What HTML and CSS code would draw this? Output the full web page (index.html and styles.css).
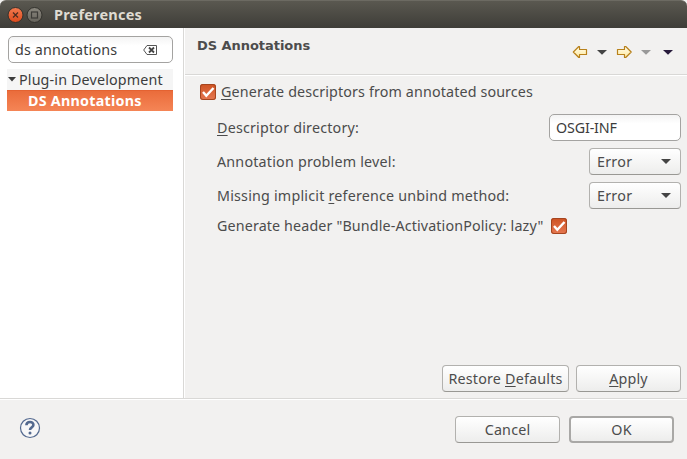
FILE: index.html
```html
<!DOCTYPE html>
<html lang="en"><head><meta charset="utf-8"><title>Preferences</title><link rel="stylesheet" href="styles.css"></head>
<body>
<div class="window">
  <header class="titlebar">
    <svg width="46" height="20" viewBox="0 0 46 20">
      <defs><linearGradient id="close" x2="0" y2="1"><stop stop-color="#f37b50"/><stop offset="1" stop-color="#dc4a1c"/></linearGradient>
      <linearGradient id="max" x2="0" y2="1"><stop stop-color="#8b887f"/><stop offset="1" stop-color="#65635b"/></linearGradient></defs>
      <circle cx="9.500" cy="10" r="7.500" fill="url(#close)" stroke="#32312c"/>
      <path d="M7 7.500l5 5M12 7.500l-5 5" stroke="#4b2c20" stroke-width="1.200"/>
      <circle cx="28.500" cy="10" r="7.500" fill="url(#max)" stroke="#32312c"/>
      <rect x="25.500" y="7" width="6" height="6" fill="none" stroke="#3c3b37" stroke-width="1.200"/>
    </svg>
    <h1><span>Preferences</span></h1>
  </header>
  <div class="body">
    <nav class="sidebar">
      <div class="field search"><span class="t-search">ds annotations</span>
        <svg width="14" height="10" viewBox="0 0 14 10"><path d="M4 .5h9.500v9H4L.7 5z" fill="none" stroke="#555"/><path d="M6 2.500l5 5M11 2.500l-5 5" stroke="#444" stroke-width="1.800"/></svg>
      </div>
      <div class="tree">
        <div class="parent"><svg width="8" height="5" viewBox="0 0 8 5"><path d="M0 0h8L4 4.500z" fill="#3c3c3c"/></svg><span class="t-plug">Plug-in Development</span></div>
        <div class="selected"><span class="t-sel">DS Annotations</span></div>
      </div>
    </nav>
    <main>
      <div class="heading"><h2><span>DS Annotations</span></h2>
        <svg width="104" height="14" viewBox="0 0 104 14">
          <defs><linearGradient id="gold" x2="0" y2="1"><stop stop-color="#fffdf0"/><stop offset="1" stop-color="#ffe99b"/></linearGradient></defs>
          <path d="M1.300 7L6.800 1.500H7.500V4.500h7v5h-7v3H6.800z" fill="url(#gold)" stroke="#b8811b" stroke-width="1.200" stroke-linejoin="round"/>
          <path d="M25 5h10l-5 4.800z" fill="#444"/>
          <path d="M59.200 7L53.700 1.500H52.500V4.500h-7v5h7v3h1.200z" fill="url(#gold)" stroke="#b8811b" stroke-width="1.200" stroke-linejoin="round"/>
          <path d="M69 5h10l-5 4.800z" fill="#999"/>
          <path d="M91 5h10l-5 4.800z" fill="#281b3c"/>
        </svg>
      </div>
      <div class="content">
        <div class="option"><i class="check"><svg width="16" height="16" viewBox="0 0 16 16"><path d="M3 8l3.300 3.800L13.500 4" fill="none" stroke="#fff" stroke-width="2.400"/></svg></i><span class="t-gen"><u>G</u>enerate descriptors from annotated sources</span></div>
        <div class="row"><span class="t-dir"><u>D</u>escriptor directory:</span><div class="field value"><span class="t-osgi">OSGI-INF</span></div></div>
        <div class="row"><span class="t-level">Annotation problem level:</span><div class="button combo"><span class="t-err">Error</span><b></b></div></div>
        <div class="row"><span class="t-miss">Missing implicit <u>r</u>eference unbind method:</span><div class="button combo"><span class="t-err">Error</span><b></b></div></div>
        <div class="row last"><span class="t-head">Generate header "Bundle-ActivationPolicy: lazy"</span><i class="check"><svg width="16" height="16" viewBox="0 0 16 16"><path d="M3 8l3.300 3.800L13.500 4" fill="none" stroke="#fff" stroke-width="2.400"/></svg></i></div>
        <div class="actions"><div class="button restore"><span class="t-rest">Restore <u>D</u>efaults</span></div><div class="button apply"><span class="t-apply"><u>A</u>pply</span></div></div>
      </div>
    </main>
  </div>
  <footer>
    <svg width="22" height="22" viewBox="0 0 22 22"><circle cx="11" cy="11" r="9.500" fill="#f7f7f8" stroke="#53698f" stroke-width="1.200"/><path d="M7.400 8.300C7.600 3.700 14.600 4.200 14.400 8c0 2.500-3.400 2.200-3.400 5" fill="none" stroke="#53698f" stroke-width="2.600"/><circle cx="11" cy="16" r="1.500" fill="#53698f"/></svg>
    <div class="button cancel"><span class="t-can">Cancel</span></div><div class="button ok"><span class="t-ok">OK</span></div>
  </footer>
</div>
</body></html>
```
FILE: styles.css
```css
* { box-sizing: border-box; }
body { margin: 0; background: #f2f1f0; color: #4c4c4c; font: 14.3px/20px "Noto Sans", sans-serif; }
.window { width: 687px; height: 459px; display: flex; flex-direction: column; overflow: hidden; }
span { white-space: nowrap; letter-spacing: .2px; }
.t-gen, .t-head { letter-spacing: .13px; }
.t-search, .t-plug { letter-spacing: .15px; }
.t-sel, .t-err { letter-spacing: .26px; }
.t-osgi { letter-spacing: -.16px; }
svg { display: block; flex: none; }
h1, h2 { margin: 0; }
u { text-decoration-thickness: 1px; text-underline-offset: 2px; text-decoration-skip-ink: none; }
.titlebar { height: 28px; flex: none; display: flex; align-items: center; padding-left: 6px; background: linear-gradient(#5a5850, #3e3d38); border-top: 1px solid #6c6a62; border-radius: 6px 6px 0 0; }
.titlebar h1 { margin: 0 0 2px 2px; font-size: 14.5px; line-height: 20px; color: #dfdbd2; }
.body { height: 370px; flex: none; display: flex; }
.sidebar { width: 184px; flex: none; background: #fff; border-right: 1px solid #d9d8d6; padding: 8px 10px 0 7px; }
.field { height: 27px; border: 1px solid #a4a3a1; border-radius: 5px; background: linear-gradient(#f4f4f4, #fff 35%); display: flex; align-items: center; color: #3c3c3c; padding-left: 7px; }
.search { justify-content: space-between; margin-left: 1px; width: 165px; padding: 0 15px 0 6px; }
.tree { margin-top: 6px; line-height: 21px; }
.parent { height: 21px; display: flex; align-items: center; background: #f5f5f5; color: #3c3c3c; padding-left: 1px; gap: 3px; }
.selected { height: 21px; padding-left: 21px; color: #fff; font-weight: 700; line-height: 19px; background: linear-gradient(#ea6c3b, #f58556); border-top: 1px solid #e46231; }
main { flex: 1; display: flex; flex-direction: column; border-left: 1px solid #fff; }
.heading { height: 47px; flex: none; display: flex; justify-content: space-between; padding: 8px 11px 0 12px; border-bottom: 1px solid #d9d8d6; box-shadow: 0 1px #fff; }
.heading h2 { font: bold 13px/20px "DejaVu Sans", sans-serif; }
.heading h2 span { letter-spacing: -.05px; }
.heading svg { margin-top: 9px; }
.content { flex: 1; display: flex; flex-direction: column; padding: 7px 6px 6px 15px; }
.option { height: 20px; display: flex; align-items: center; gap: 5px; margin-bottom: 12px; }
.check { width: 16px; height: 16px; flex: none; display: block; border-radius: 3px; background: linear-gradient(#ce5222, #e67851); box-shadow: inset 0 0 0 1px #a5451f; }
.row { height: 27px; margin: 0 0 7px 17px; display: flex; align-items: center; justify-content: space-between; }
.row.last { height: 20px; margin-top: 0; justify-content: flex-start; gap: 8px; }
.value { width: 132px; padding-left: 6px; }
.button { height: 27px; border: 1px solid #b2b1ae; border-bottom-color: #999894; border-radius: 4px; background: linear-gradient(#fff, #ededec); display: flex; align-items: center; justify-content: center; }
.combo { width: 92px; justify-content: space-between; padding: 0 9px 0 7px; }
.combo b { border: 5px solid transparent; border-top-color: #444; border-bottom: 0; }
.actions { margin-top: auto; display: flex; justify-content: flex-end; gap: 7px; }
.restore { width: 127px; }
.apply, .cancel, .ok { width: 105px; }
footer { flex: 1; display: flex; border-top: 1px solid #d9d8d6; box-shadow: inset 0 1px #fff; padding: 17px 13px 0 19px; }
footer svg { margin-top: 1px; }
footer .cancel { margin-left: auto; margin-right: 9px; }
.ok { border: 2px solid #a9a8a6; }
```
